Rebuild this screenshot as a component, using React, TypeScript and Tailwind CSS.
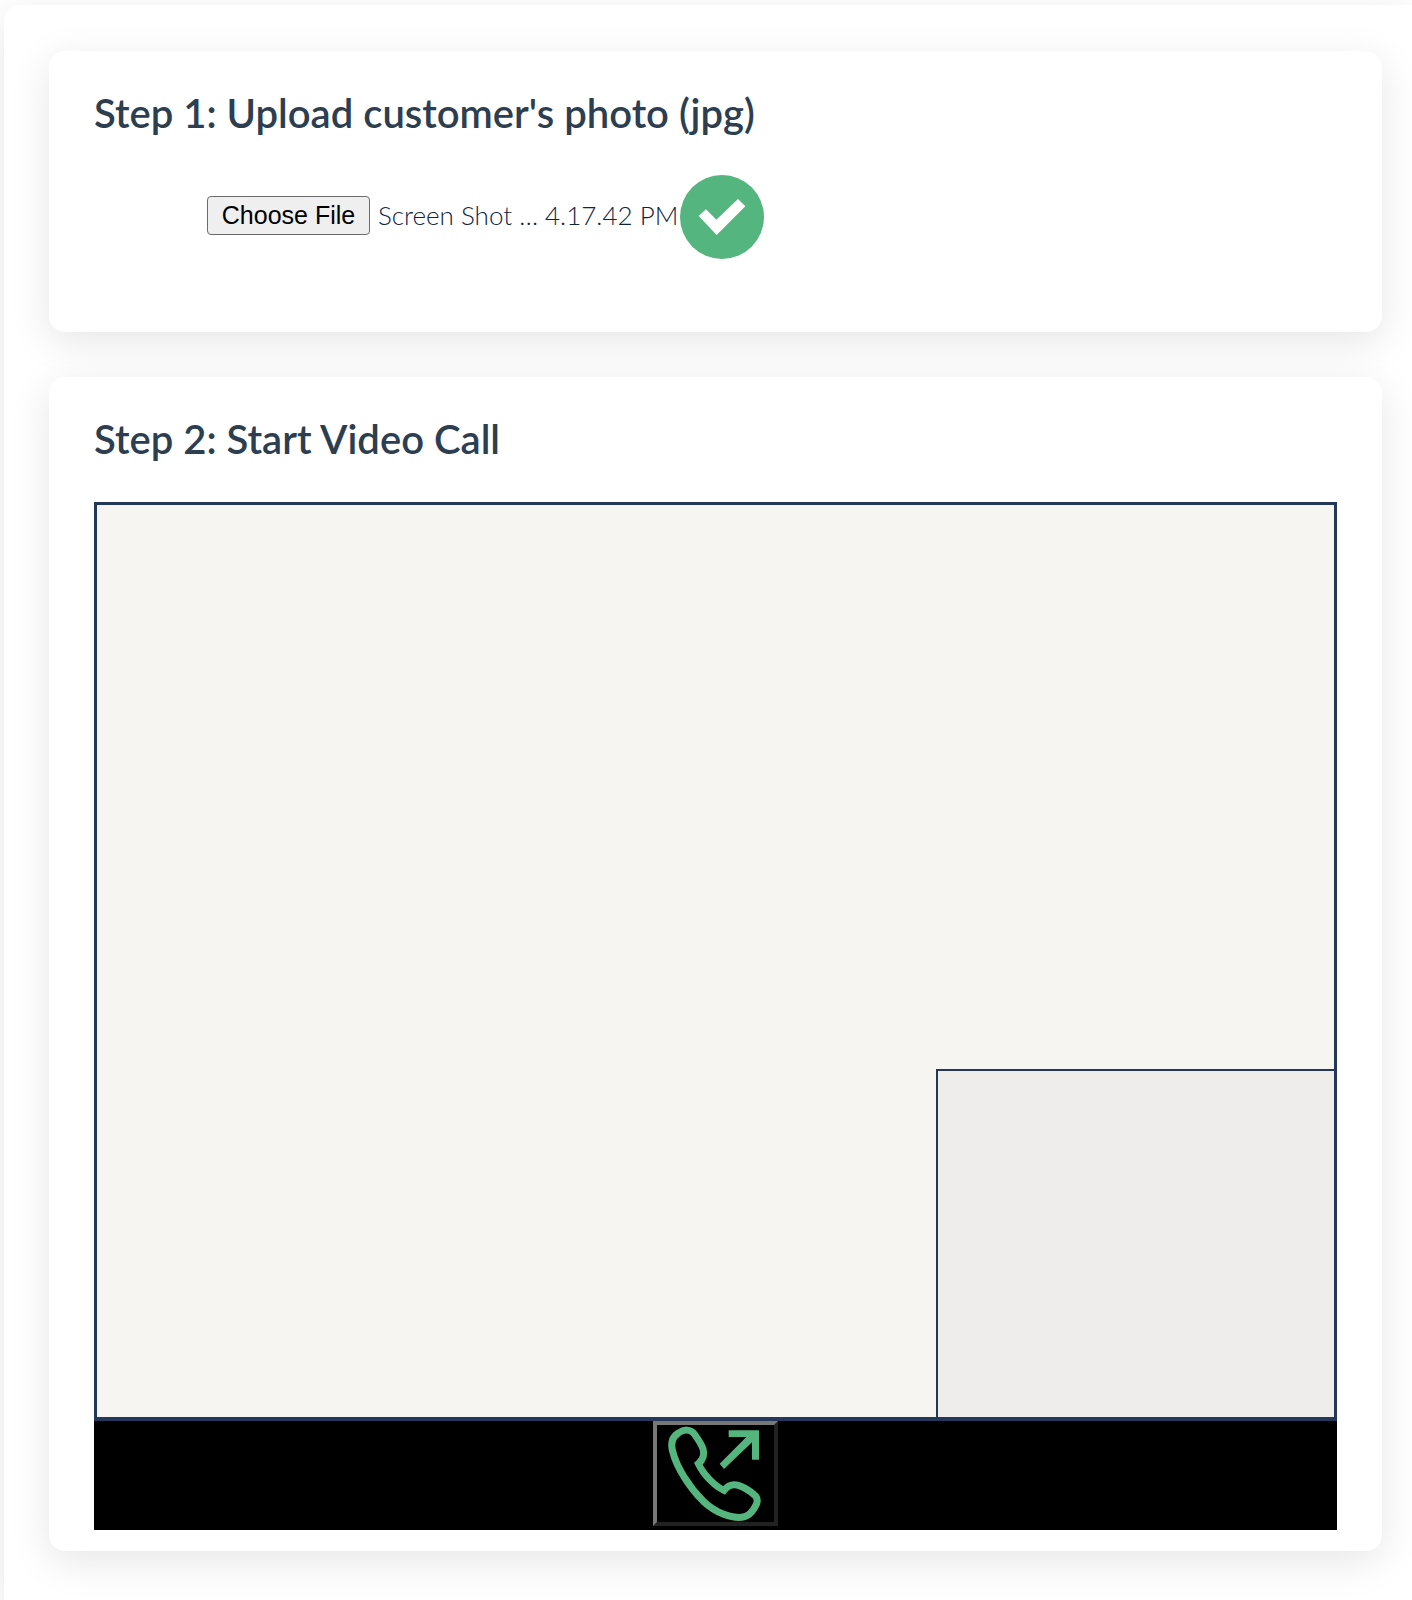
import { useRef, useState } from "react";
import type { ReactNode } from "react";

function StepCard({ title, className, children }: { title: string; className: string; children: ReactNode }) {
  return (
    <section className={`rounded-2xl bg-white px-[45px] pt-9 shadow-[0_10px_40px_rgba(0,0,0,0.1)] ${className}`}>
      <h2 className="text-[40px] leading-[52px] font-semibold text-[#2c3e50]">{title}</h2>
      {children}
    </section>
  );
}

function CheckBadge() {
  return (
    <svg viewBox="0 0 252 252" className="ml-0.5 size-[84px] shrink-0" role="img" aria-label="Uploaded">
      <circle cx="126" cy="126" r="126" fill="#55b57e" />
      <path d="M56 123L78 103L109 134L174 72L196 94L110 180Z" fill="#fff" />
    </svg>
  );
}

function OutgoingCallIcon() {
  return (
    <svg viewBox="75 76 300 291" className="h-[97px] w-[100px]" aria-hidden="true">
      <path
        d="M175 192C190 180 194 165 189 147C183 131 173 117 163 103C152 88 132 88 115 100C97 112 91 130 98 155C110 205 150 265 190 305C230 342 275 356 305 353C325 351 340 335 350 312C354 298 350 290 342 285C328 272 310 262 295 257C278 252 263 258 252 272C225 260 190 225 175 192Z"
        fill="none"
        stroke="#55b57e"
        strokeWidth="21"
      />
      <path d="M266 92H357V180H336V128L252 208L239 192L319 112H266Z" fill="#55b57e" />
    </svg>
  );
}

export default function App() {
  const fileInput = useRef<HTMLInputElement>(null);
  const [fileName, setFileName] = useState("Screen Shot … 4.17.42 PM");

  return (
    <div className="min-h-screen overflow-hidden bg-white pt-[5px] pl-1 font-['Lato',sans-serif]">
      <main className="flex min-h-screen flex-col gap-[45px] rounded-tl-2xl bg-white pt-[46px] pr-[30px] pb-[44px] pl-[45px] shadow-[0_10px_40px_rgba(0,0,0,0.1)]">
        <StepCard title="Step 1: Upload customer's photo (jpg)" className="pb-[73px]">
          <div className="mt-9 flex items-center pl-[113px]">
            <button
              type="button"
              onClick={() => fileInput.current?.click()}
              className="mb-1 h-[39px] w-[163px] shrink-0 rounded-[4px] border border-[#6b6b6b] bg-[#efefef] font-['Liberation_Sans',sans-serif] text-[25px] leading-8 text-black"
            >
              Choose File
            </button>
            <input
              ref={fileInput}
              type="file"
              accept="image/jpeg"
              aria-label="Customer's photo"
              className="hidden"
              onChange={(e) => setFileName(e.target.files?.[0]?.name ?? fileName)}
            />
            <span className="mb-1 ml-2 text-[26px] leading-8 font-light whitespace-nowrap text-[#10243e]">{fileName}</span>
            <CheckBadge />
          </div>
        </StepCard>

        <StepCard title="Step 2: Start Video Call" className="pb-[21px]">
          <div className="mt-[37px] flex h-[919px] items-end justify-end border-[3px] border-b-4 border-[#24385a] bg-[#f6f5f1]">
            <div className="h-[348px] w-[32.2%] border-t-2 border-l-2 border-[#24385a] bg-[#eeedeb]" />
          </div>
          <div className="flex h-[109px] justify-center bg-black">
            <button
              type="button"
              aria-label="Start call"
              className="h-[105px] w-[125px] border-4 border-t-[#777] border-r-[#222] border-b-[#222] border-l-[#777] px-2"
            >
              <OutgoingCallIcon />
            </button>
          </div>
        </StepCard>
      </main>
    </div>
  );
}
